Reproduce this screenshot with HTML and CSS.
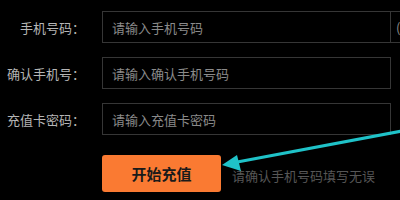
FILE: index.html
```html
<!DOCTYPE html>
<html lang="zh-CN">
<head>
    <meta charset="UTF-8">
    <title>充值</title>
    <link rel="stylesheet" href="styles.css">
</head>
<body>
    <div class="recharge">
        <form class="recharge-form">
            <div class="form-row">
                <label for="phone">手机号码：</label>
                <input type="text" id="phone" class="form-control" placeholder="请输入手机号码">
                <button type="button" class="code-btn">(获取验证码</button>
            </div>
            <div class="form-row">
                <label for="phoneConfirm">确认手机号：</label>
                <input type="text" id="phoneConfirm" class="form-control" placeholder="请输入确认手机号码">
            </div>
            <div class="form-row">
                <label for="cardPwd">充值卡密码：</label>
                <input type="text" id="cardPwd" class="form-control" placeholder="请输入充值卡密码">
            </div>
            <div class="form-row submit-row">
                <button type="submit" class="btn">开始充值</button>
                <span class="hint">请确认手机号码填写无误</span>
            </div>
        </form>
        <!-- annotation arrow -->
        <svg class="arrow" width="400" height="200" viewBox="0 0 400 200">
            <line x1="402" y1="131" x2="232" y2="163" stroke="#1fc2c8" stroke-width="3" stroke-linecap="round"/>
            <polygon points="222,165 237,155 241,171" fill="#1fc2c8"/>
        </svg>
    </div>
</body>
</html>
```

FILE: styles.css
```css
html, body {
    margin: 0;
    padding: 0;
    background-color: #000;
    overflow: hidden;
}

.recharge {
    position: relative;
    width: 400px;
    height: 200px;
    font-family: "Noto Sans CJK SC", "Noto Sans", sans-serif;
}

.recharge-form {
    padding-top: 11px;
    display: flex;
    flex-direction: column;
    gap: 14px;
}

.form-row {
    display: flex;
    align-items: center;
    height: 32px;
}

.form-row label {
    width: 85px;
    margin-right: 17px;
    text-align: right;
    font-size: 13px;
    color: #b5b5b5;
    flex-shrink: 0;
    white-space: nowrap;
}

.form-control {
    box-sizing: border-box;
    width: 289px;
    height: 32px;
    flex-shrink: 0;
    padding: 0 9px;
    border: 1px solid #363636;
    background-color: #000;
    font-family: inherit;
    font-size: 13px;
    color: #ccc;
    outline: none;
}

.form-control::placeholder {
    color: #8a8a8a;
}

.code-btn {
    box-sizing: border-box;
    height: 32px;
    flex-shrink: 0;
    padding: 0 5px;
    border: 1px solid #363636;
    border-left: none;
    background-color: #000;
    font-family: inherit;
    font-size: 13px;
    color: #8a8a8a;
    text-align: left;
    white-space: nowrap;
}

.submit-row {
    margin-top: 6px;
    height: 37px;
    padding-left: 102px;
}

.btn {
    width: 119px;
    height: 37px;
    border: none;
    border-radius: 3px;
    background-color: #fa7a32;
    font-family: inherit;
    font-size: 15px;
    font-weight: bold;
    color: #1a1a1a;
    cursor: pointer;
}

.hint {
    margin-left: 11px;
    margin-top: 4px;
    font-size: 13px;
    color: #565656;
    white-space: nowrap;
}

.arrow {
    position: absolute;
    left: 0;
    top: 0;
    pointer-events: none;
}
```
